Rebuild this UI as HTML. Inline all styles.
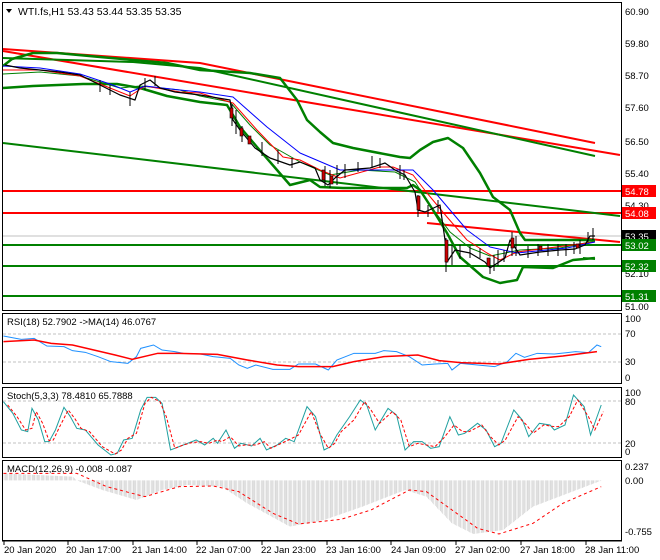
<!DOCTYPE html>
<html><head><meta charset="utf-8"><style>
html,body{margin:0;padding:0;background:#fff;}
svg{display:block;font-family:"Liberation Sans",Arial,sans-serif;font-size:10px;}
</style></head><body>
<svg width="660" height="560" viewBox="0 0 660 560" xmlns="http://www.w3.org/2000/svg">
<defs>
<pattern id="bars" width="3" height="10" patternUnits="userSpaceOnUse"><rect x="0" y="0" width="1" height="10" fill="#b4b4b4"/></pattern>
</defs>
<rect width="660" height="560" fill="#fff"/>
<rect x="2.5" y="2.5" width="619" height="308" fill="none" stroke="#000"/>
<polygon points="6,9 12,9 9,13" fill="#000"/>
<text x="18" y="15" font-size="10.5">WTI.fs,H1  53.43 53.44 53.35 53.35</text>

<line x1="3" y1="236" x2="621" y2="236" stroke="#c0c0c0"/>
<line x1="3" y1="191" x2="621" y2="191" stroke="#f00" stroke-width="2"/>
<line x1="3" y1="213" x2="621" y2="213" stroke="#f00" stroke-width="2"/>
<line x1="3" y1="245" x2="621" y2="245" stroke="#008000" stroke-width="2"/>
<line x1="3" y1="266" x2="621" y2="266" stroke="#008000" stroke-width="2"/>
<line x1="3" y1="296" x2="621" y2="296" stroke="#008000" stroke-width="2"/>

<g fill="none" stroke-linejoin="round">
<polyline points="3,49 200,63 595,143" stroke="#f00" stroke-width="2"/>
<line x1="3" y1="51" x2="620" y2="155" stroke="#f00" stroke-width="2"/>
<line x1="3" y1="143" x2="620" y2="216" stroke="#008000" stroke-width="2"/>
<polyline points="3,58 133,62 200,68 595,156" stroke="#008000" stroke-width="2"/>
<line x1="427" y1="223" x2="620" y2="242" stroke="#f00" stroke-width="2"/>
<line x1="583" y1="258" x2="595" y2="259" stroke="#008000" stroke-width="2"/>
<!-- upper band -->
<polyline points="3,66 12,59 33,53 57,53 100,57 133,60 167,63 200,70 250,73 280,78 297,100 307,120 320,132 333,143 353,148 400,157 410,158 420,150 433,142 448,138 463,148 480,173 493,197 510,210 520,233 525,240 595,240" stroke="#008000" stroke-width="2.5"/>
<!-- lower band -->
<polyline points="3,88 33,86 83,84 117,84 140,88 167,96 200,102 227,105 240,127 257,147 277,170 290,185 310,180 320,187 343,188 407,188 413,185 420,190 433,210 447,233 460,257 483,277 500,283 517,280 523,267 553,268 573,260 595,258" stroke="#008000" stroke-width="2.5"/>
<!-- middle band -->
<polyline points="3,74 40,72 80,76 120,88 140,86 180,90 200,96 230,102 250,125 270,145 300,162 330,175 360,170 395,172 415,182 430,205 450,232 470,248 490,256 520,250 560,248 595,241" stroke="#008000" stroke-width="1"/>
<!-- red MA -->
<polyline points="3,70 40,70 80,76 110,88 130,96 145,86 180,92 200,93 233,103 257,130 283,157 300,160 320,170 340,178 380,167 393,167 413,175 427,193 447,217 467,240 487,253 500,260 517,252 595,242" stroke="#f00" stroke-width="1"/>
<!-- blue MA -->
<polyline points="3,66 40,68 80,74 110,84 130,92 145,86 180,90 200,92 233,97 267,127 300,153 340,170 413,170 433,190 467,230 490,247 517,253 567,248 595,242" stroke="#00f" stroke-width="1"/>
<!-- price -->
<polyline points="5,65 20,68 40,70 60,72 80,75 100,85 120,95 135,100 140,85 150,80 160,88 175,92 200,95 230,100 233,120 240,130 255,148 270,158 290,165 300,162 315,168 320,180 328,185 335,178 345,170 370,168 385,163 395,170 405,175 415,192 418,210 425,212 440,205 445,240 447,262 455,250 470,253 485,262 490,268 505,258 510,240 520,255 540,252 560,250 575,249 585,245 590,236 595,236" stroke="#000" stroke-width="1.2"/>
</g>
<g stroke="#000" stroke-width="1">
<path d="M100,80v12M110,85v10M130,92v14M145,78v12M155,76v10M232,104v22M236,110v24M242,126v16M262,142v14M278,150v14M292,158v10M325,166v20M330,170v18M337,165v20M345,164v14M358,162v10M372,156v12M380,158v10M400,165v14M404,170v10M418,195v22M428,205v12M438,200v12M446,238v34M452,245v20M460,245v14M470,246v12M480,248v10M490,258v16M494,255v16M498,250v16M504,250v12M512,232v24M516,236v20M528,246v12M538,244v12M548,244v12M558,244v12M566,244v12M574,242v12M580,240v14M588,232v10M593,228v12"/>
</g>
<g fill="#c00" stroke="#000" stroke-width="0.6">
<rect x="230" y="108" width="3" height="10"/><rect x="240" y="128" width="3" height="8"/><rect x="248" y="136" width="3" height="8"/><rect x="322" y="170" width="3" height="10"/><rect x="330" y="176" width="3" height="8"/><rect x="417" y="196" width="3" height="14"/><rect x="445" y="240" width="3" height="22"/><rect x="487" y="258" width="3" height="8"/><rect x="511" y="238" width="3" height="10"/><rect x="539" y="246" width="3" height="4"/><rect x="576" y="244" width="3" height="4"/>
</g>

<g font-size="9.5" fill="#000">
<text x="625" y="15">60.90</text>
<text x="625" y="47">59.80</text>
<text x="625" y="79">58.70</text>
<text x="625" y="111">57.60</text>
<text x="625" y="145">56.50</text>
<text x="625" y="177">55.40</text>
<text x="625" y="209">54.30</text>
<text x="625" y="277">52.10</text>
<text x="625" y="310">51.00</text>
</g>
<g font-size="9.5" fill="#fff">
<rect x="622" y="185" width="34" height="12" fill="#f00"/><text x="625" y="195">54.78</text>
<rect x="622" y="207" width="34" height="12" fill="#f00"/><text x="625" y="217">54.08</text>
<rect x="622" y="230" width="34" height="12" fill="#000"/><text x="625" y="240">53.35</text>
<rect x="622" y="239" width="34" height="12" fill="#008000"/><text x="625" y="249">53.02</text>
<rect x="622" y="260" width="34" height="12" fill="#008000"/><text x="625" y="270">52.32</text>
<rect x="622" y="290" width="34" height="12" fill="#008000"/><text x="625" y="300">51.31</text>
</g>

<rect x="2.5" y="313.5" width="619" height="70" fill="none" stroke="#000"/>
<line x1="3" y1="334" x2="621" y2="334" stroke="#c0c0c0" stroke-dasharray="3,2"/>
<line x1="3" y1="362" x2="621" y2="362" stroke="#c0c0c0" stroke-dasharray="3,2"/>
<text x="7" y="325" font-size="9.5">RSI(18) 52.7902  -&gt;MA(14) 46.0767</text>
<g font-size="9.5"><text x="625" y="322">100</text><text x="625" y="337">70</text><text x="625" y="365">30</text><text x="625" y="381">0</text></g>
<g transform="translate(0,310) scale(0.4264,0.3333)" fill="none">
<polyline vector-effect="non-scaling-stroke" stroke="#1e90ff" stroke-width="1" points="8,78 50,88 80,85 110,108 150,110 170,122 200,127 230,140 260,155 300,160 320,140 330,115 360,105 380,120 410,125 430,130 470,132 500,140 540,145 560,165 580,175 600,165 640,178 680,178 700,162 740,162 770,180 790,150 830,130 880,130 900,122 930,125 960,140 990,165 1020,162 1050,160 1060,180 1080,160 1120,165 1160,170 1190,155 1210,130 1230,142 1260,130 1300,132 1330,128 1350,125 1380,128 1400,105 1410,110"/>
<polyline vector-effect="non-scaling-stroke" stroke="#f00" stroke-width="1.5" points="8,95 80,90 120,100 170,105 220,120 270,135 310,148 370,130 420,130 510,133 580,150 650,165 700,170 780,170 830,155 900,140 980,135 1030,152 1080,158 1170,162 1240,148 1320,138 1400,125"/>
</g>

<rect x="2.5" y="387.5" width="619" height="70" fill="none" stroke="#000"/>
<line x1="3" y1="401" x2="621" y2="401" stroke="#c0c0c0" stroke-dasharray="3,2"/>
<line x1="3" y1="443" x2="621" y2="443" stroke="#c0c0c0" stroke-dasharray="3,2"/>
<text x="7" y="399" font-size="9.5">Stoch(5,3,3) 78.4810 65.7888</text>
<g font-size="9.5"><text x="625" y="396">100</text><text x="625" y="405">80</text><text x="625" y="447">20</text><text x="625" y="455">0</text></g>
<g transform="translate(0,310) scale(0.4264,0.3333)" fill="none">
<polyline vector-effect="non-scaling-stroke" stroke="#20a0a0" stroke-width="1" points="8,275 30,310 50,360 65,365 75,295 90,330 105,395 115,395 130,360 150,292 165,320 180,355 200,360 230,405 260,435 275,430 290,390 310,385 330,300 345,262 365,262 380,280 400,420 420,410 440,400 460,390 480,405 500,385 510,400 530,360 550,415 565,400 590,408 610,385 625,420 650,405 670,385 690,395 720,290 740,320 760,420 775,410 790,375 820,320 845,270 860,285 880,360 910,295 930,315 950,420 970,395 990,395 1010,415 1030,410 1055,320 1075,375 1090,370 1120,340 1140,360 1160,410 1175,400 1205,300 1225,330 1240,380 1265,340 1290,345 1300,360 1325,345 1345,255 1370,290 1385,375 1410,285"/>
<polyline vector-effect="non-scaling-stroke" stroke="#f00" stroke-width="1" stroke-dasharray="3,2" points="18,285 40,320 60,360 75,355 85,305 100,340 115,392 125,390 140,350 160,300 175,325 190,355 210,365 240,410 270,432 285,420 300,385 320,370 340,280 355,262 375,275 390,320 410,415 430,405 450,398 470,395 490,400 510,390 520,395 540,380 560,408 575,405 600,405 620,395 635,415 660,400 680,388 700,375 730,305 750,370 770,415 785,400 800,365 830,330 855,275 870,300 890,340 920,305 940,330 960,410 980,400 1000,405 1020,410 1040,385 1065,345 1085,365 1100,365 1130,345 1150,380 1170,405 1185,390 1215,320 1235,345 1250,370 1275,345 1300,350 1310,350 1335,320 1355,270 1380,320 1395,360 1415,305"/>
</g>

<rect x="2.5" y="460.5" width="619" height="80" fill="none" stroke="#000"/>
<text x="7" y="472" font-size="9.5">MACD(12,26,9) -0.008 -0.087</text>
<g font-size="9.5"><text x="625" y="470">0.237</text><text x="625" y="484">0.00</text><text x="625" y="535">-0.755</text></g>
<g transform="translate(0,310) scale(0.4264,0.3333)">
<polygon fill="url(#bars)" points="8,511 8,490 170,500 180,511 240,540 320,570 380,540 440,525 520,530 580,580 680,650 760,630 850,590 950,540 1000,560 1060,640 1110,672 1180,660 1250,590 1410,512 1410,511"/>
<polyline fill="none" vector-effect="non-scaling-stroke" stroke="#f00" stroke-width="1" stroke-dasharray="3,3" points="8,490 180,490 250,530 340,560 420,530 500,528 560,545 640,610 700,642 800,628 870,600 960,540 1000,545 1060,600 1120,655 1170,672 1250,640 1320,580 1410,530"/>
</g>

<line x1="2" y1="541" x2="622" y2="541" stroke="#000"/>
<g stroke="#000"><path d="M4,541v4M68,541v4M133,541v4M197,541v4M262,541v4M327,541v4M391,541v4M456,541v4M521,541v4M586,541v4"/></g>
<g font-size="9.5">
<text x="4" y="553">20 Jan 2020</text>
<text x="66" y="553">20 Jan 17:00</text>
<text x="132" y="553">21 Jan 14:00</text>
<text x="196" y="553">22 Jan 07:00</text>
<text x="261" y="553">22 Jan 23:00</text>
<text x="326" y="553">23 Jan 16:00</text>
<text x="391" y="553">24 Jan 09:00</text>
<text x="455" y="553">27 Jan 02:00</text>
<text x="520" y="553">27 Jan 18:00</text>
<text x="585" y="553">28 Jan 11:00</text>
</g>
</svg>
</body></html>
